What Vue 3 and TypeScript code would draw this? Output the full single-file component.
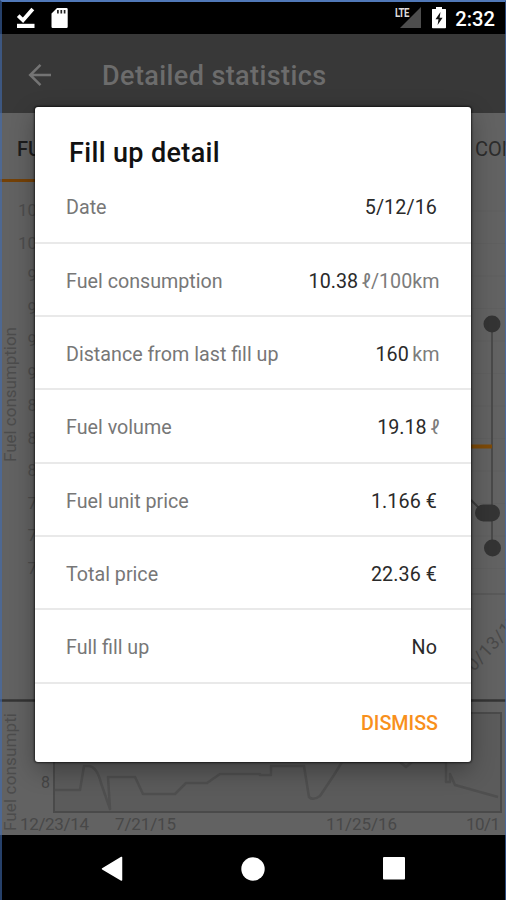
<script setup lang="ts">
interface DetailRow {
  label: string
  value: string
  unit?: string
}

interface Tick {
  text: string
  y: number
}

const rows: DetailRow[] = [
  { label: 'Date', value: '5/12/16' },
  { label: 'Fuel consumption', value: '10.38', unit: 'ℓ/100km' },
  { label: 'Distance from last fill up', value: '160', unit: 'km' },
  { label: 'Fuel volume', value: '19.18', unit: 'ℓ' },
  { label: 'Fuel unit price', value: '1.166 €' },
  { label: 'Total price', value: '22.36 €' },
  { label: 'Full fill up', value: 'No' },
]

const ticks: Tick[] = ['10', '10', '9', '9', '9', '9', '8', '8', '8', '7', '7', '7'].map(
  (text, i) => ({ text, y: 34 + i * 32.5 }),
)
</script>

<template>
  <div class="screen">
    <header class="status">
      <svg class="done" width="20" height="22" viewBox="0 0 20 22">
        <path d="M2.2 8.700 7 13.300 16.800 2" fill="none" stroke="#fff" stroke-width="3.800" />
        <rect x="1" y="16.800" width="17.500" height="4.200" fill="#fff" />
      </svg>
      <svg class="card" width="18" height="22" viewBox="0 0 18 22">
        <path d="M6 1h9.500a1.200 1.200 0 0 1 1.200 1.200v17.600a1.200 1.200 0 0 1-1.200 1.200H1.700a1.200 1.200 0 0 1-1.200-1.200V6.500z" fill="#fff" />
        <path d="M6.900 3v3.500M10.300 3v3.500M13.600 3v3.500" stroke="#222" stroke-width="1.700" />
      </svg>
      <span class="spacer"></span>
      <span class="signal">
        <svg width="22" height="21" viewBox="0 0 22 21"><path d="M22 0v21H1z" fill="#4d4d4d" /></svg>
        <span class="lte">LTE</span>
      </span>
      <svg class="battery" width="14" height="22" viewBox="0 0 14 22">
        <path d="M4 0h6v2h3.500a.5.500 0 0 1 .5.500v18a.8.800 0 0 1-.8.800H.800a.8.800 0 0 1-.8-.8v-18a.5.500 0 0 1 .5-.5H4z" fill="#fff" />
        <path d="M8.500 5 3.500 12.300h3L5.600 18l5-7.300h-3z" fill="#111" />
      </svg>
      <span class="clock">2:32</span>
    </header>

    <div class="appbar">
      <svg width="24" height="24" viewBox="0 0 24 24">
        <path d="M24 12H3M13.500 1.800 3.200 12l10.300 10.200" fill="none" stroke="#747474" stroke-width="2.500" />
      </svg>
      <span class="heading">Detailed statistics</span>
    </div>

    <div class="tabs">
      <span class="tab active">FUEL</span>
      <span class="tab next">CON</span>
    </div>

    <svg class="chart" width="506" height="517" viewBox="0 0 506 517">
      <path v-for="t in ticks" :key="t.y" :d="`M36 ${t.y - 5}H506`" stroke="#5f5f5f" />
      <path d="M36 412H506" stroke="#515151" />
      <text v-for="t in ticks" :key="t.y" x="37" :y="t.y" text-anchor="end" class="tick">{{ t.text }}</text>
      <text transform="translate(15.500 280) rotate(-90)" textLength="135" class="axis">Fuel consumption</text>
      <path d="M492 142V366" stroke="#494949" stroke-width="2" />
      <path d="M471 318 484 331" stroke="#3b3b3b" stroke-width="2" />
      <path d="M468 264.500H492" stroke="#7d4a08" stroke-width="4" />
      <circle cx="492" cy="142" r="8.500" fill="#343434" />
      <rect x="475" y="322.500" width="25" height="17" rx="8.500" fill="#343434" />
      <circle cx="492.500" cy="366" r="8.500" fill="#343434" />
      <text transform="translate(474 490) rotate(-47)" class="slant">0/13/17</text>
    </svg>

    <svg class="overview" width="506" height="136" viewBox="0 0 506 136">
      <path d="M0 1.500H506" stroke="#343434" stroke-width="2.500" />
      <rect x="54" y="14" width="447" height="99" fill="#5b5b5b" stroke="#4a4a4a" stroke-width="2" />
      <path d="M55 91H80L84 67H89Q97 68 101 84L110 110 108 78H135L143 95H175L186 84H207L220 75H260V76H271V67H304L309 98Q313 102 320 97L334 76 342 63H400L406 68 412 63H446V83H450V75L455 86 498 98" fill="none" stroke="#4f4f4f" stroke-width="2.500" stroke-linejoin="round" />
      <text x="41" y="89" class="small">8</text>
      <text transform="translate(15.500 132) rotate(-90)" textLength="118" class="axis">Fuel consumpti</text>
      <text x="20" y="131" textLength="69" class="date">12/23/14</text>
      <text x="115" y="131" textLength="61" class="date">7/21/15</text>
      <text x="326" y="131" textLength="71" class="date">11/25/16</text>
      <text x="466" y="131" textLength="34" class="date">10/1</text>
    </svg>

    <nav class="navbar">
      <svg width="22" height="26" viewBox="0 0 22 26"><path d="M20.500 1.500v22.500L1.500 12.800z" fill="#fff" stroke="#fff" stroke-width="1.500" stroke-linejoin="round" /></svg>
      <svg width="24" height="24" viewBox="0 0 24 24"><circle cx="12" cy="12" r="11.700" fill="#fff" /></svg>
      <svg width="22" height="23" viewBox="0 0 22 23"><rect width="22" height="22.500" rx="1" fill="#fff" /></svg>
    </nav>

    <div class="frame"></div>

    <section class="dialog" role="dialog">
      <h1 class="title">Fill up detail</h1>
      <div class="rows">
        <div v-for="row in rows" :key="row.label" class="row">
          <span class="label">{{ row.label }}</span>
          <span class="value" :class="{ measured: row.unit }">
            <span>{{ row.value }}</span>
            <span v-if="row.unit" class="unit">{{ row.unit }}</span>
          </span>
        </div>
      </div>
      <div class="actions"><button class="dismiss" type="button">DISMISS</button></div>
    </section>
  </div>
</template>

<style>
body {
  margin: 0;
  background: #000;
}
</style>

<style scoped>
.screen {
  position: relative;
  display: flex;
  flex-direction: column;
  width: 506px;
  height: 900px;
  overflow: hidden;
  background: #626262;
  font-family: Roboto, "Liberation Sans", sans-serif;
}
.status {
  display: flex;
  align-items: flex-start;
  box-sizing: border-box;
  height: 34px;
  padding: 7px 11px 0 16px;
  background: #000;
}
.card { margin-left: 15px; }
.spacer { flex: 1; }
.signal {
  position: relative;
  width: 22px;
  height: 21px;
  margin-right: 11px;
}
.lte {
  position: absolute;
  left: -4px;
  top: 0;
  color: #ddd;
  font-size: 13px;
  line-height: 11px;
  font-weight: 700;
  transform: scaleX(0.74);
  transform-origin: left;
  letter-spacing: -0.800px;
}
.signal svg { display: block; }
.battery { margin-right: 9px; }
.clock {
  color: #fff;
  font-size: 20.200px;
  line-height: 24px;
  font-weight: 500;
}
.appbar {
  display: flex;
  align-items: center;
  box-sizing: border-box;
  height: 79px;
  padding: 2px 0 0 27px;
  background: #383838;
}
.heading {
  padding-top: 2px;
  margin-left: 51px;
  color: #6c6c6c;
  font-size: 27px;
  font-weight: 500;
  letter-spacing: 0.400px;
}
.tabs {
  display: flex;
  justify-content: space-between;
  height: 69px;
  background: #626262;
}
.tab {
  box-sizing: border-box;
  padding-top: 24px;
  font-size: 20px;
  line-height: 24px;
  white-space: nowrap;
}
.active {
  width: 160px;
  padding-left: 17px;
  border-bottom: 3px solid #744107;
  color: #1c1c1c;
  font-weight: 500;
}
.next {
  width: 31px;
  color: #2c2c2c;
}
.chart, .overview { display: block; flex: none; }
.tick { fill: #4d4d4d; font-size: 17px; }
.axis { fill: #4c4c4c; font-size: 17px; }
.slant { fill: #494949; font-size: 18px; letter-spacing: 0.500px; }
.small { fill: #454545; font-size: 16px; }
.date { fill: #484848; font-size: 17px; }
.navbar {
  display: flex;
  align-items: center;
  gap: 118px;
  height: 65px;
  padding: 2px 0 0 101px;
  box-sizing: border-box;
  background: #000;
}
.frame {
  position: absolute;
  inset: 0;
  box-sizing: border-box;
  border-top: 2px solid #5078b8;
  border-left: 2px solid rgba(64, 108, 178, 0.6);
  border-right: 1px solid rgba(64, 108, 178, 0.7);
}
.dialog {
  position: absolute;
  left: 35px;
  top: 107px;
  width: 436px;
  height: 655px;
  display: flex;
  flex-direction: column;
  border-radius: 3px;
  background: #fff;
  box-shadow: 0 0 2px 1px rgba(0, 0, 0, 0.6), 0 8px 24px rgba(0, 0, 0, 0.32);
}
.title {
  margin: 0;
  padding: 30px 34px 0;
  color: #111;
  font-size: 27px;
  line-height: 32px;
  font-weight: 500;
  letter-spacing: 0.350px;
}
.rows { padding-top: 1.500px; }
.row {
  display: flex;
  justify-content: space-between;
  align-items: center;
  box-sizing: border-box;
  height: 73.300px;
  padding: 3.500px 34px 0 31px;
  border-bottom: 2px solid #e9e9e9;
  font-size: 19.700px;
}
.label { color: #777; }
.value {
  display: flex;
  gap: 4px;
  color: #2a2a2a;
  letter-spacing: 0.100px;
}
.measured {
  gap: 3.500px;
  margin-right: -2.500px;
  letter-spacing: 0;
}
.unit { color: #7c7c7c; }
.actions {
  display: flex;
  flex: 1;
  justify-content: flex-end;
  align-items: center;
  padding: 2px 33px 0 0;
}
.dismiss {
  padding: 0;
  border: 0;
  background: none;
  color: #f8901c;
  font: 500 19.700px Roboto, "Liberation Sans", sans-serif;
}
</style>
